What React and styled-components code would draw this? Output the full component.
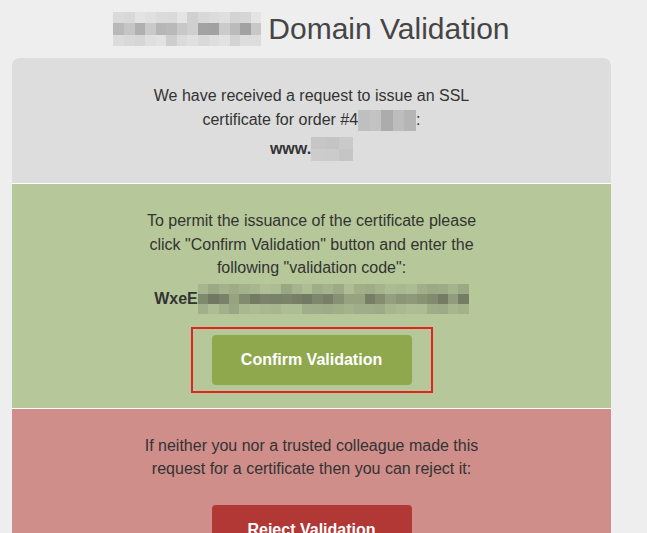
import React from 'react';
import styled, { createGlobalStyle } from 'styled-components';

const GlobalStyle = createGlobalStyle`
  html, body {
    margin: 0;
    padding: 0;
    background: #eeeeee;
    font-family: "Liberation Sans", Arial, sans-serif;
  }
`;

const Page = styled.div`
  width: 599px;
  margin: 0 0 0 12px;
  padding-top: 9px;
`;

const Title = styled.h1`
  margin: 0 0 9px;
  display: flex;
  align-items: center;
  justify-content: center;
  gap: 7px;
  font-size: 30px;
  font-weight: normal;
  color: #454545;
  height: 40px;
`;

const Card = styled.div`
  border-radius: 7px;
  overflow: hidden;
  display: flex;
  flex-direction: column;
  gap: 1px;
  background: #ffffff;
`;

const Section = styled.div`
  background: ${p => p.$bg};
  padding: ${p => p.$pad};
  display: flex;
  flex-direction: column;
  align-items: center;
  text-align: center;
  color: #333333;
  font-size: 16px;
  line-height: 23.5px;
`;

const Text = styled.p`
  margin: 0;
  width: 345px;
`;

const Strong = styled.div`
  margin-top: ${p => p.$top || 6}px;
  font-weight: bold;
  display: flex;
  align-items: center;
  justify-content: center;
`;

const Highlight = styled.div`
  margin-top: 13px;
  border: 2px solid #e52222;
  padding: 6px 19px;
`;

const Button = styled.div`
  width: 200px;
  height: 50px;
  border-radius: 4px;
  background: ${p => p.$bg};
  color: #ffffff;
  font-weight: bold;
  font-size: 16px;
  display: flex;
  align-items: center;
  justify-content: center;
  margin-top: ${p => p.$top || 0}px;
`;

const PixelBox = styled.span`
  display: inline-grid;
  vertical-align: middle;
`;

const Cell = styled.span`
  display: block;
`;

const rand = seed => {
  let s = seed;
  return () => {
    s = (s * 9301 + 49297) % 233280;
    return s / 233280;
  };
};

const Pixelated = ({ cols, rows, w, h, seed, base, dark, light }) => {
  const r = rand(seed);
  const cells = [];
  for (let y = 0; y < rows; y++) {
    for (let x = 0; x < cols; x++) {
      const mid = rows === 1 || (y > 0 && y < rows - 1);
      const t = mid ? 0.3 + r() * 0.7 : r() * 0.35;
      const c = [0, 1, 2].map(i => Math.round(light[i] + (dark[i] - light[i]) * t));
      cells.push(<Cell key={`${x}-${y}`} style={{ background: `rgb(${c.join(',')})` }} />);
    }
  }
  return (
    <PixelBox style={{ gridTemplateColumns: `repeat(${cols}, ${w / cols}px)`, gridTemplateRows: `repeat(${rows}, ${h / rows}px)`, background: base }}>
      {cells}
    </PixelBox>
  );
};

const App = () => (
  <>
    <GlobalStyle />
    <Page>
      <Title>
        <Pixelated cols={14} rows={3} w={148} h={34} seed={7} base="#eee" dark={[160, 160, 160]} light={[230, 230, 230]} />
        <span>Domain Validation</span>
      </Title>
      <Card>
        <Section $bg="#dddddd" $pad="26px 0 22px">
          <Text>
            We have received a request to issue an SSL certificate for order #4
            <Pixelated cols={5} rows={1} w={58} h={21} seed={3} base="#ddd" dark={[170, 170, 170]} light={[215, 215, 215]} />
            :
          </Text>
          <Strong>
            www.
            <Pixelated cols={3} rows={2} w={42} h={24} seed={11} base="#ddd" dark={[175, 175, 175]} light={[205, 205, 205]} />
          </Strong>
        </Section>
        <Section $bg="#b6c899" $pad="25px 0 15px">
          <Text>
            To permit the issuance of the certificate please click "Confirm Validation" button and enter the following "validation code":
          </Text>
          <Strong $top={4}>
            WxeE
            <Pixelated cols={26} rows={3} w={271} h={30} seed={5} base="#b6c899" dark={[110, 118, 95]} light={[176, 192, 150]} />
          </Strong>
          <Highlight>
            <Button $bg="#8fa84e">Confirm Validation</Button>
          </Highlight>
        </Section>
        <Section $bg="#cf8e8a" $pad="25px 0 30px">
          <Text>
            If neither you nor a trusted colleague made this request for a certificate then you can reject it:
          </Text>
          <Button $bg="#b23835" $top={24}>Reject Validation</Button>
        </Section>
      </Card>
    </Page>
  </>
);

export default App;
